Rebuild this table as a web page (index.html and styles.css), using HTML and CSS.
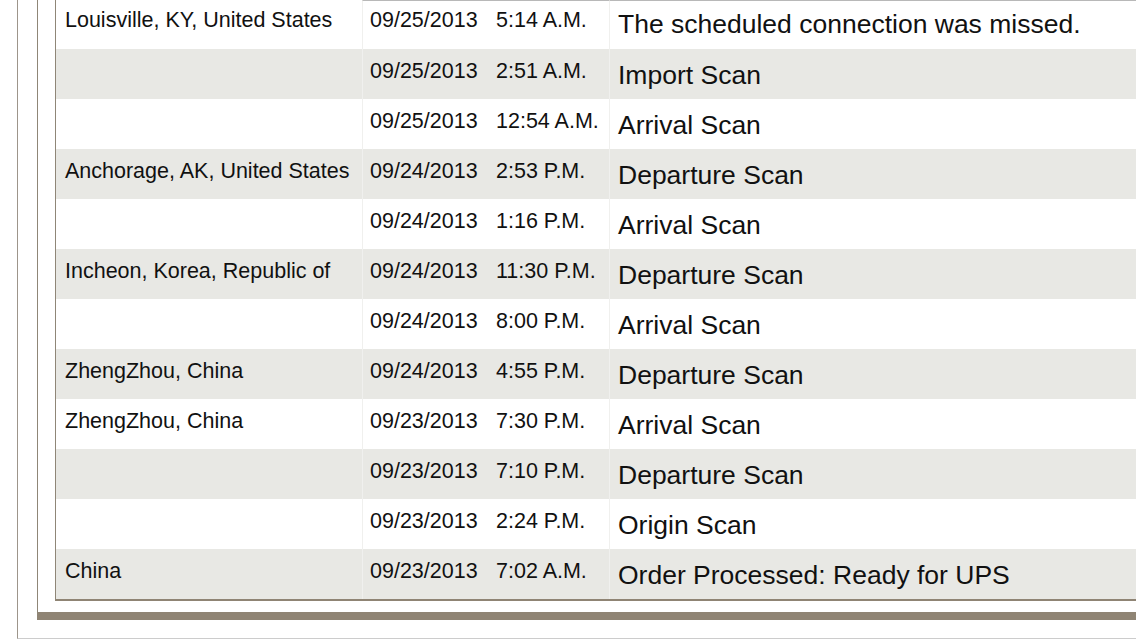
FILE: index.html
```html
<!DOCTYPE html>
<html>
<head>
<meta charset="utf-8">
<link rel="stylesheet" href="styles.css">
</head>
<body>
<div class="outer">
  <div class="inner">
    <table class="track">
      <colgroup>
        <col class="c-loc"><col class="c-date"><col class="c-time"><col class="c-act">
      </colgroup>
      <tbody>
        <tr class="first"><td class="loc">Louisville, KY, United States</td><td class="date">09/25/2013</td><td class="time">5:14 A.M.</td><td class="act">The scheduled connection was missed.</td></tr>
        <tr class="alt"><td class="loc"></td><td class="date">09/25/2013</td><td class="time">2:51 A.M.</td><td class="act">Import Scan</td></tr>
        <tr><td class="loc"></td><td class="date">09/25/2013</td><td class="time">12:54 A.M.</td><td class="act">Arrival Scan</td></tr>
        <tr class="alt"><td class="loc">Anchorage, AK, United States</td><td class="date">09/24/2013</td><td class="time">2:53 P.M.</td><td class="act">Departure Scan</td></tr>
        <tr><td class="loc"></td><td class="date">09/24/2013</td><td class="time">1:16 P.M.</td><td class="act">Arrival Scan</td></tr>
        <tr class="alt"><td class="loc">Incheon, Korea, Republic of</td><td class="date">09/24/2013</td><td class="time">11:30 P.M.</td><td class="act">Departure Scan</td></tr>
        <tr><td class="loc"></td><td class="date">09/24/2013</td><td class="time">8:00 P.M.</td><td class="act">Arrival Scan</td></tr>
        <tr class="alt"><td class="loc">ZhengZhou, China</td><td class="date">09/24/2013</td><td class="time">4:55 P.M.</td><td class="act">Departure Scan</td></tr>
        <tr><td class="loc">ZhengZhou, China</td><td class="date">09/23/2013</td><td class="time">7:30 P.M.</td><td class="act">Arrival Scan</td></tr>
        <tr class="alt"><td class="loc"></td><td class="date">09/23/2013</td><td class="time">7:10 P.M.</td><td class="act">Departure Scan</td></tr>
        <tr><td class="loc"></td><td class="date">09/23/2013</td><td class="time">2:24 P.M.</td><td class="act">Origin Scan</td></tr>
        <tr class="alt"><td class="loc">China</td><td class="date">09/23/2013</td><td class="time">7:02 A.M.</td><td class="act">Order Processed: Ready for UPS</td></tr>
      </tbody>
    </table>
  </div>
</div>
</body>
</html>
```

FILE: styles.css
```css
html, body {
  margin: 0;
  padding: 0;
  background: #ffffff;
  overflow: hidden;
}
body {
  width: 1136px;
  height: 640px;
  font-family: "Liberation Sans", Arial, Helvetica, sans-serif;
  color: #111111;
}
.outer {
  margin-left: 17px;
  border-left: 1px solid #9d958b;
  border-bottom: 1px solid #cccccc;
  padding-left: 19px;
  padding-bottom: 18px;
}
.inner {
  border-left: 1px solid #8f8677;
  border-bottom: 8px solid #8f8474;
  padding-left: 17px;
  padding-bottom: 11px;
}
.track {
  border-collapse: separate;
  border-spacing: 0;
  table-layout: fixed;
  width: 1120px;
  border-left: 1px solid #8f8677;
  border-bottom: 2px solid #8f8474;
}
.c-loc { width: 306px; }
.c-date { width: 126px; }
.c-time { width: 121px; }
.c-act { width: auto; }
.track tr { height: 50px; }
.track tr.first { height: 49px; }
.track tr.alt td { background: #e8e8e4; }
.track td {
  vertical-align: top;
  padding: 10px 0 0 8px;
  font-size: 21.5px;
  line-height: 24.7px;
  white-space: nowrap;
  overflow: hidden;
}
.track td.loc { padding-left: 9px; }
.track td.date { border-left: 1px solid #f0f0ee; padding-left: 7px; }
.track td.time { padding-left: 8px; }
.track td.act {
  border-left: 1px solid #f0f0ee;
  padding-top: 11px;
  padding-left: 8px;
  font-size: 26.5px;
  line-height: 30px;
}
.track tr.first td { padding-top: 8px; }
.track tr.first td.act { padding-top: 8px; }
.track tr.first td.date,
.track tr.first td.time,
.track tr.first td.act { border-top: 1px solid #b8b8b8; padding-top: 7px; }
.track tr.first td.act { padding-top: 8px; }
```
